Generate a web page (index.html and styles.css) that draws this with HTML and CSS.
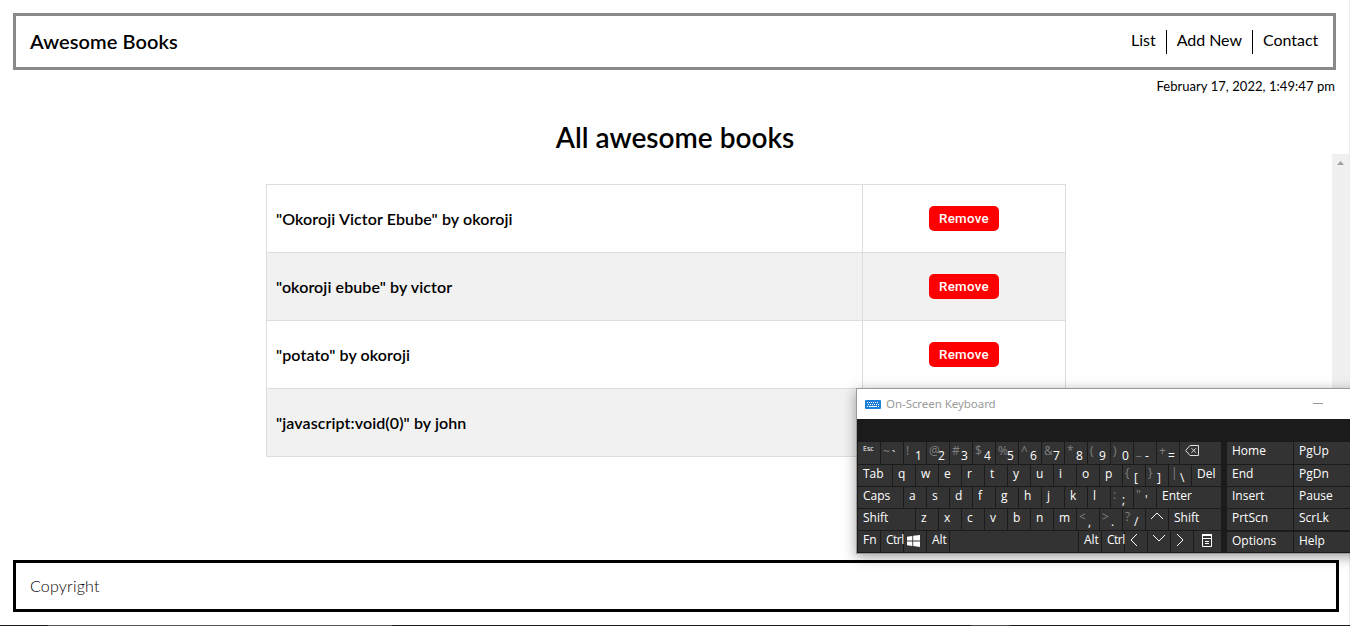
FILE: index.html
```html
<!DOCTYPE html>
<html lang="en">
<head>
<meta charset="utf-8">
<title>Awesome Books</title>
<link rel="stylesheet" href="styles.css">
</head>
<body>
<header class="header">
  <h1 class="brand">Awesome Books</h1>
  <nav class="nav"><a>List</a><a class="divided">Add New</a><a class="divided">Contact</a></nav>
</header>
<p class="date">February 17, 2022, 1:49:47 pm</p>
<h2 class="title">All awesome books</h2>
<main class="scroller">
  <div class="books">
    <div class="book"><span class="name">"Okoroji Victor Ebube" by okoroji</span><span class="action"><button class="remove">Remove</button></span></div>
    <div class="book"><span class="name">"okoroji ebube" by victor</span><span class="action"><button class="remove">Remove</button></span></div>
    <div class="book"><span class="name">"potato" by okoroji</span><span class="action"><button class="remove">Remove</button></span></div>
    <div class="book"><span class="name">"javascript:void(0)" by john</span><span class="action"></span></div>
  </div>
  <div class="scrollbar"><svg width="7" height="4" viewBox="0 0 7 4"><path d="M3.5 0L7 4H0z" fill="#a0a0a0"/></svg></div>
</main>
<footer class="footer">Copyright</footer>
<div class="taskbar"><i class="tb-start"></i><i class="tb-search"></i><i class="tb-apps"></i><i class="tb-active"></i><i class="tb-tray"></i></div>
<div class="edge"></div>

<section class="osk">
  <div class="osk-title">
    <svg width="16" height="9" viewBox="0 0 16 9"><rect width="16" height="9" rx="1" fill="#1e7fd6"/><path d="M2 2.5h12M3 4.5h11" stroke="#fff" stroke-dasharray="1 1"/><path d="M2 6.5h1m1 0h8m1 0h1" stroke="#fff"/></svg>
    <span class="osk-name">On-Screen Keyboard</span>
    <span class="minimize"></span>
  </div>
  <div class="keys">
    <div class="board">
      <div class="row first"><b class="key esc">Esc</b><b class="key dual"><s class="tilde">~</s><u class="tick">`</u></b><b class="key dual"><s>!</s><u>1</u></b><b class="key dual"><s>@</s><u>2</u></b><b class="key dual"><s>#</s><u>3</u></b><b class="key dual"><s>$</s><u>4</u></b><b class="key dual"><s>%</s><u>5</u></b><b class="key dual"><s>^</s><u>6</u></b><b class="key dual"><s>&amp;</s><u>7</u></b><b class="key dual"><s>*</s><u>8</u></b><b class="key dual"><s>(</s><u>9</u></b><b class="key dual"><s>)</s><u>0</u></b><b class="key dual"><s>_</s><u>-</u></b><b class="key dual"><s>+</s><u>=</u></b><b class="key fill"><svg class="back" width="14" height="11" viewBox="0 0 14 11" fill="none" stroke="#ddd"><path d="M5 .5h8.5v10H5L.7 5.5zM6.5 3.2l4.5 4.6m0-4.6l-4.5 4.6"/></svg></b></div>
      <div class="row"><b class="key w34">Tab</b><b class="key">q</b><b class="key">w</b><b class="key">e</b><b class="key">r</b><b class="key">t</b><b class="key">y</b><b class="key">u</b><b class="key">i</b><b class="key">o</b><b class="key">p</b><b class="key dual"><s>{</s><u>[</u></b><b class="key dual"><s>}</s><u>]</u></b><b class="key dual"><s>|</s><u>\</u></b><b class="key fill">Del</b></div>
      <div class="row"><b class="key w45">Caps</b><b class="key">a</b><b class="key">s</b><b class="key">d</b><b class="key">f</b><b class="key">g</b><b class="key">h</b><b class="key">j</b><b class="key">k</b><b class="key">l</b><b class="key dual"><s>:</s><u>;</u></b><b class="key dual"><s>"</s><u>'</u></b><b class="key fill">Enter</b></div>
      <div class="row"><b class="key w57">Shift</b><b class="key">z</b><b class="key">x</b><b class="key">c</b><b class="key">v</b><b class="key">b</b><b class="key">n</b><b class="key">m</b><b class="key dual"><s>&lt;</s><u>,</u></b><b class="key dual"><s>&gt;</s><u>.</u></b><b class="key dual"><s>?</s><u>/</u></b><b class="key"><svg class="arrow up" width="12" height="12" viewBox="0 0 12 12"><path d="M0 9l6-6 6 6"/></svg></b><b class="key fill">Shift</b></div>
      <div class="row"><b class="key">Fn</b><b class="key ctrl">Ctrl</b><b class="key"><svg class="win" width="13" height="12" viewBox="0 0 13 12" fill="#fff"><path d="M0 1.7l5.3-.8v4.6H0zM6.2.8L13 0v5.5H6.2zM0 6.4h5.3V11L0 10.3zM6.2 6.4H13V12l-6.8-.9z"/></svg></b><b class="key">Alt</b><b class="key space"></b><b class="key">Alt</b><b class="key ctrl">Ctrl</b><b class="key"><svg class="arrow" width="12" height="12" viewBox="0 0 12 12"><path d="M7 0L1 6l6 6"/></svg></b><b class="key"><svg class="arrow" width="12" height="12" viewBox="0 0 12 12"><path d="M0 1l6 6 6-6"/></svg></b><b class="key"><svg class="arrow" width="12" height="12" viewBox="0 0 12 12"><path d="M1 0l6 6-6 6"/></svg></b><b class="key fill"><svg class="menu" width="10" height="13" viewBox="0 0 10 13" fill="none" stroke="#fff"><path d="M.5 1v11.5h9V1M0 4.5h10M3 7.5h4M3 9.5h4"/><path d="M0 1h10" stroke-width="2"/></svg></b></div>
    </div>
    <div class="side">
      <b class="key">Home</b><b class="key">PgUp</b>
      <b class="key">End</b><b class="key">PgDn</b>
      <b class="key">Insert</b><b class="key">Pause</b>
      <b class="key">PrtScn</b><b class="key">ScrLk</b>
      <b class="key low">Options</b><b class="key low">Help</b>
    </div>
  </div>
</section>
</body>
</html>
```
FILE: styles.css
```css
* { box-sizing: border-box; }
html, body { margin: 0; height: 626px; overflow: hidden; }
body { position: relative; background: #fff; color: #000; font-family: Lato, sans-serif; font-size: 16px; display: flex; flex-direction: column; }
h1, h2, p { margin: 0; }

.header { margin: 13px 14px 0 13px; height: 57px; border: 3px solid #8a8a8a; padding: 0 14px; display: flex; justify-content: space-between; }
.brand { font-size: 20px; font-weight: 600; line-height: 24px; padding-top: 13px; letter-spacing: .08px; }
.nav { display: flex; padding-top: 14px; height: 38px; line-height: 20px; letter-spacing: -.03px; }
.nav a { padding: 0 10px; }
.nav a:last-child { padding-right: 0; width: 67px; }
.divided { border-left: 1px solid #000; }
.date { margin: 8px 15px 0; text-align: right; font-size: 13px; line-height: 17px; letter-spacing: .05px; }
.title { margin-top: 25px; height: 34px; line-height: 34px; font-size: 28px; font-weight: 600; text-align: center; }

.scroller { height: 396px; display: flex; justify-content: space-between; }
.books { margin: 30px 0 0 266px; width: 800px; height: 273px; border: 1px solid #ddd; }
.book { height: 68px; display: flex; border-bottom: 1px solid #ddd; }
.book:last-child { height: 67px; border-bottom: 0; }
.book:nth-child(even) { background: #f1f1f1; }
.name { width: 595px; padding: 23px 9px; font-weight: 600; line-height: 22px; letter-spacing: .1px; }
.action { flex: 1; border-left: 1px solid #ddd; display: flex; justify-content: center; padding-top: 21px; }
.remove { width: 70px; height: 25px; border: 0; padding: 0; border-radius: 5px; background: #f00; color: #fff; font: 500 13.3px Roboto, sans-serif; letter-spacing: .3px; }
.scrollbar { width: 18px; background: #f0f0f0; padding: 7px 0 0 5px; }
.scrollbar svg { display: block; }

.footer { margin: 10px 11px 0 13px; height: 52px; border: 3px solid #000; padding: 13px 14px; line-height: 20px; font-weight: 300; letter-spacing: .2px; }
.taskbar { margin-top: 13px; height: 1px; display: flex; background: #1b1b1b; }
.tb-start { width: 48px; }
.tb-search { width: 344px; background: #555; }
.tb-apps { width: 579px; }
.tb-active { width: 39px; background: #484848; }
.edge { position: absolute; top: 0; right: 0; width: 1px; height: 625px; background: #ececec; }

.osk { position: absolute; left: 856px; top: 388px; width: 520px; height: 166px; border: 1px solid #999; background: #1b1b1b; box-shadow: 0 3px 12px rgba(0,0,0,.38); font-family: "Open Sans", sans-serif; font-size: 12px; color: #fff; }
.osk-title { height: 30px; background: #fff; display: flex; align-items: center; padding-left: 8px; color: #999; }
.osk-name { margin: -2px 0 0 5px; width: 110px; font-family: "Noto Sans", sans-serif; font-size: 11.5px; letter-spacing: -.05px; white-space: nowrap; }
.minimize { width: 10px; height: 1px; background: #999; margin-left: 317px; margin-top: -1px; }
.keys { display: flex; gap: 6px; padding: 23px 0 0 1px; }
.board { width: 363px; }
.row { display: flex; gap: 1px; height: 21px; margin-bottom: 1px; }
.row.first { height: 22px; }
.key { width: 22px; flex: none; background: #333; padding-left: 5px; font-weight: 400; line-height: 18px; white-space: nowrap; }
.key.w34 { width: 34px; }
.key.w45 { width: 45px; }
.key.w57 { width: 57px; }
.key.space { width: 128px; }
.key.fill { flex: 1; width: auto; }
.key.esc { font-size: 7px; line-height: 13px; }
.key.ctrl { letter-spacing: -.5px; }
.dual { display: flex; padding-left: 2px; }
.dual s { width: 9px; color: #808080; text-decoration: none; line-height: 16px; }
.dual u { text-decoration: none; line-height: 26px; height: 21px; }
.first .dual s { line-height: 17px; }
.first .dual u { line-height: 27px; }
.first .dual .tilde { line-height: 20px; }
.side { display: grid; grid-template-columns: 66px 80px; grid-template-rows: 22px 21px 21px 21px 20px; gap: 1px; }
.side .key { width: auto; }
.side .low { margin-top: 1px; height: 20px; line-height: 18px; }
.arrow { fill: none; stroke: #fff; margin-top: 3px; display: block; }
.arrow.up { margin-top: 1px; }
.back { display: block; margin: 3px 0 0; }
.win { display: block; margin: 4px 0 0 -2px; }
.menu { display: block; margin: 3px 0 0 3px; }
```
